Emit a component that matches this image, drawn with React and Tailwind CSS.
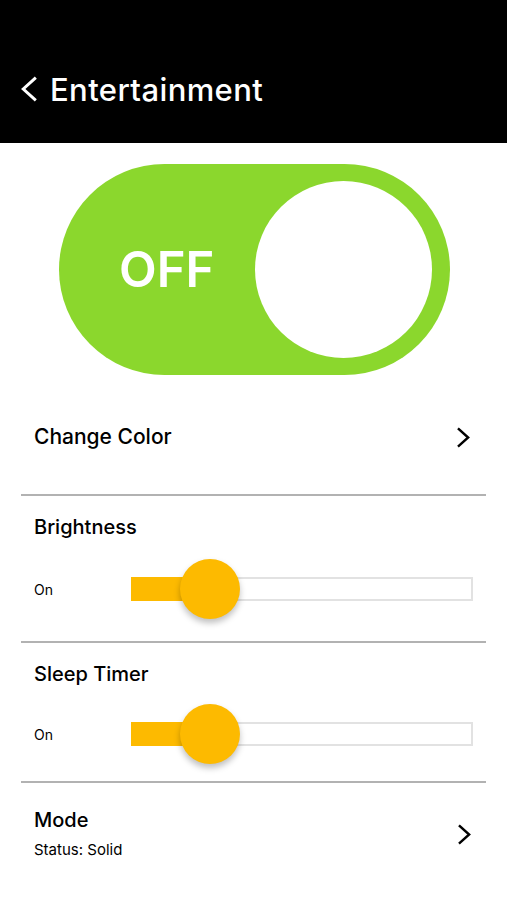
import React, { useState } from 'react';

const font = { fontFamily: 'Inter, "Open Sans", sans-serif' };

function Chevron({ className, left }) {
  return (
    <svg viewBox="0 0 14 22" className={className} fill="none" stroke="currentColor" strokeWidth="2.6" strokeLinecap="square">
      <polyline points={left ? '12,2 2,11 12,20' : '2,2 12,11 2,20'} />
    </svg>
  );
}

function Slider({ value }) {
  return (
    <div className="flex items-center">
      <span className="w-[97px] text-[14px] text-black">On</span>
      <div className="relative flex-1 h-[24px] border-2 border-[#e2e2e2] bg-white">
        <div className="absolute -left-[2px] -top-[2px] h-[24px] bg-[#fdba00]" style={{ width: value }} />
        <div
          className="absolute top-1/2 -translate-y-1/2 w-[60px] h-[60px] rounded-full bg-[#fdba00] shadow-[0_4px_6px_rgba(0,0,0,0.25)]"
          style={{ left: value - 7 }}
        />
      </div>
    </div>
  );
}

export default function App() {
  const [on, setOn] = useState(false);

  return (
    <div className="w-[507px] h-[900px] bg-white overflow-hidden" style={font}>
      {/* Header */}
      <div className="h-[143px] bg-black flex items-end pb-[38px] pl-[21px]">
        <Chevron left className="w-[16px] h-[28px] text-white mr-[13px] mb-[2px]" />
        <h1 className="text-white text-[31px] font-medium leading-none tracking-[0.4px]">Entertainment</h1>
      </div>

      {/* Big toggle */}
      <div className="pt-[21px] flex justify-center pl-[2px]">
        <button
          type="button"
          onClick={() => setOn(!on)}
          className="w-[391px] h-[211px] rounded-full bg-[#8bd72d] flex items-center justify-between pl-[60px] pr-[18px]"
        >
          <span className="text-white text-[49px] font-semibold leading-none">OFF</span>
          <span className="w-[177px] h-[177px] rounded-full bg-white" />
        </button>
      </div>

      <div className="px-[21px]">
        {/* Change Color */}
        <div className="h-[121px] flex items-start justify-between pt-[46px] px-[13px] border-b-2 border-[#b2b2b2]">
          <span className="text-[21px] font-medium text-black">Change Color</span>
          <Chevron className="w-[13px] h-[21px] text-black mt-[6px] mr-[3px]" />
        </div>

        {/* Brightness */}
        <div className="pt-[18px] pb-[22px] px-[13px] border-b-2 border-[#b2b2b2]">
          <div className="text-[20px] font-medium text-black leading-[26px]">Brightness</div>
          <div className="mt-[37px] mb-[18px]">
            <Slider value={54} />
          </div>
        </div>

        {/* Sleep Timer */}
        <div className="pt-[18px] pb-[17px] px-[13px] border-b-2 border-[#b2b2b2]">
          <div className="text-[20px] font-medium text-black leading-[26px]">Sleep Timer</div>
          <div className="mt-[35px] mb-[18px]">
            <Slider value={54} />
          </div>
        </div>

        {/* Mode */}
        <div className="pt-[24px] px-[13px] flex items-center justify-between">
          <div>
            <div className="text-[20px] font-medium text-black leading-[26px]">Mode</div>
            <div className="text-[15px] text-black mt-[6px]">Status: Solid</div>
          </div>
          <Chevron className="w-[13px] h-[21px] text-black mr-[2px]" />
        </div>
      </div>
    </div>
  );
}
